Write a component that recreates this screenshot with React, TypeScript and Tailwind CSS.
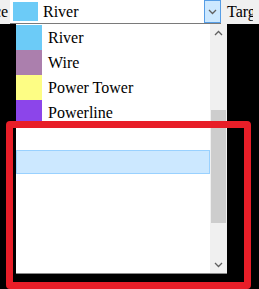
import React from 'react';

const items = [
  { name: 'River', color: '#6ccbf7' },
  { name: 'Wire', color: '#ab7fad' },
  { name: 'Power Tower', color: '#fdfd84' },
  { name: 'Powerline', color: '#8c45ea' },
];

const Chevron: React.FC<{ up?: boolean }> = ({ up }) => (
  <svg width="9" height="6" viewBox="0 0 9 6" className={up ? 'rotate-180' : ''}>
    <path d="M1 1 L4.5 4.5 L8 1" fill="none" stroke="#606060" strokeWidth="1.3" />
  </svg>
);

const App: React.FC = () => {
  return (
    <div className="relative w-[259px] h-[289px] bg-black overflow-hidden text-black font-['Liberation_Serif',serif] text-[16px]">
      {/* combobox row */}
      <div className="flex h-[24px] bg-[#f0f0f0]">
        <div className="w-[16px] leading-[23px] -ml-[6px] overflow-hidden whitespace-nowrap">ce</div>
        <div className="flex w-[211px] bg-white border-b border-[#7a7a7a]">
          <div className="w-[25px] h-[19px] mt-[2px] ml-[3px] bg-[#6ccbf7]" />
          <div className="ml-[5px] leading-[23px]">River</div>
          <div className="ml-auto w-[17px] h-[23px] bg-[#cce8ff] border border-[#569de5] flex items-center justify-center">
            <Chevron />
          </div>
        </div>
        <div className="pl-[6px] leading-[23px] whitespace-nowrap overflow-hidden w-[32px]">Target</div>
      </div>

      {/* dropdown list */}
      <div className="flex">
        <div className="w-[16px]" />
        <div className="flex w-[211px] h-[250px] bg-white border-b border-[#8a8a8a]">
          <div className="flex flex-col flex-1 pt-[1px]">
            {items.map((it) => (
              <div key={it.name} className="flex h-[25px] items-center">
                <div className="w-[26px] h-[25px]" style={{ background: it.color }} />
                <div className="ml-[6px]">{it.name}</div>
              </div>
            ))}
            <div className="h-[25px]" />
            <div className="h-[24px] bg-[#cce8ff] border border-[#99d1ff]" />
          </div>
          <div className="flex flex-col w-[17px] bg-[#f0f0f0]">
            <div className="h-[17px] flex items-center justify-center">
              <Chevron up />
            </div>
            <div className="h-[69px]" />
            <div className="h-[113px] mx-[1px] bg-[#cdcdcd]" />
            <div className="flex-1" />
            <div className="h-[17px] flex items-center justify-center">
              <Chevron />
            </div>
          </div>
        </div>
      </div>

      {/* red annotation */}
      <div className="absolute left-[6px] top-[121px] w-[245px] h-[168px] border-[7px] border-[#e81e28] rounded-[4px]" />
    </div>
  );
};

export default App;
